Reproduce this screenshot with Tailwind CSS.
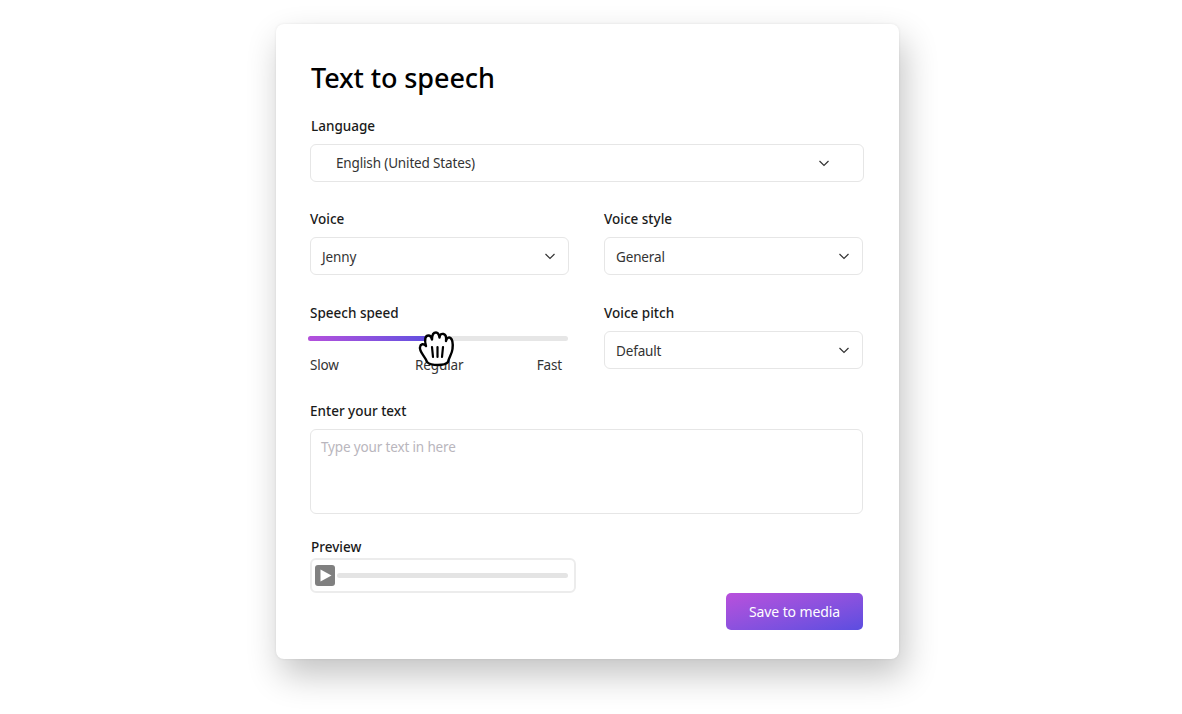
<!DOCTYPE html>
<html lang="en">
<head>
  <meta charset="UTF-8" />
  <title>Text to speech</title>
  <script src="https://cdn.jsdelivr.net/npm/@tailwindcss/browser@4"></script>
</head>
<body class="bg-white h-[714px] w-[1182px] overflow-hidden pt-[24px] font-['Noto_Sans',sans-serif] text-[#1a1a1a]">

  <div class="ml-[276px] w-[623px] h-[635px] bg-white rounded-[8px] shadow-[5px_16px_34px_rgba(0,0,0,0.24),0_0_3px_rgba(0,0,0,0.08)] pt-[36px] pl-[34px] pr-[36px] relative">

    <h1 class="text-[27px] leading-[36px] font-medium text-black pl-[1px] h-[36px] tracking-[-0.1px]">Text to speech</h1>

    <!-- Language -->
    <div class="mt-[20px] pl-[1px] h-[20px] text-[13.5px] leading-[20px] font-medium">Language</div>
    <div class="mt-[8px] h-[38px] w-[554px] border-[1.5px] border-[#e6e6e6] rounded-[6px] flex items-center justify-between pl-[25px] pr-[33px] text-[13.5px] tracking-[-0.15px] text-[#333]">
      <span class="pt-[1px]">English (United States)</span>
      <svg width="12" height="12" viewBox="0 0 12 12" fill="none" stroke="#333" stroke-width="1.2"><path d="M1.5 4l4.5 4.5L10.5 4"/></svg>
    </div>

    <div class="grid grid-cols-[259px_259px] gap-x-[35px] mt-[27px]">
      <!-- Voice -->
      <div>
        <div class="h-[20px] text-[13.5px] leading-[20px] font-medium">Voice</div>
        <div class="mt-[8px] h-[38px] border-[1.5px] border-[#e6e6e6] rounded-[6px] flex items-center justify-between pl-[11px] pr-[12px] text-[13.5px] tracking-[-0.15px] text-[#333]">
          <span class="pt-[3px]">Jenny</span>
          <svg width="12" height="12" viewBox="0 0 12 12" fill="none" stroke="#333" stroke-width="1.2"><path d="M1.5 4l4.5 4.5L10.5 4"/></svg>
        </div>
      </div>
      <div>
        <div class="h-[20px] text-[13.5px] leading-[20px] font-medium">Voice style</div>
        <div class="mt-[8px] h-[38px] border-[1.5px] border-[#e6e6e6] rounded-[6px] flex items-center justify-between pl-[11px] pr-[12px] text-[13.5px] tracking-[-0.15px] text-[#333]">
          <span class="pt-[3px]">General</span>
          <svg width="12" height="12" viewBox="0 0 12 12" fill="none" stroke="#333" stroke-width="1.2"><path d="M1.5 4l4.5 4.5L10.5 4"/></svg>
        </div>
      </div>

      <!-- Speech speed -->
      <div class="mt-[28px] relative">
        <div class="h-[20px] text-[13.5px] leading-[20px] font-medium">Speech speed</div>
        <div class="mt-[13px] -ml-[2px] w-[260px] h-[5px] rounded-full bg-[#e6e6e6]">
          <div class="w-[122px] h-[5px] rounded-full bg-gradient-to-r from-[#b44fdc] to-[#5f4fe0]"></div>
        </div>
        <div class="mt-[14px] flex justify-between pr-[7px] text-[13.5px] leading-[20px] tracking-[-0.15px] text-[#333]">
          <span>Slow</span><span class="ml-[3px]">Regular</span><span>Fast</span>
        </div>
        <!-- grabbing cursor -->
        <svg class="absolute left-[107px] top-[26px] overflow-visible" width="40" height="38" viewBox="0 0 40 38">
          <circle cx="20" cy="6" r="10" fill="#fff" opacity=".9"/>
          <path d="M10 33C8 27 2 23 3 18C3.500 15 6.500 14 9 17C7 10 8.500 6.500 11.500 6.500C13.500 6.500 14.500 8 15 10.500C15 5.500 16.500 3.500 19 3.500C21 3.500 22 5.500 22.500 8.500C23 5 24.500 4.500 26.500 5C28.500 5.500 29.500 8 29 12C30 8.500 32 8 33.500 9C36 11 36 16 35.500 20C35 25 32 28 31 33C28 37 14 37 10 33Z" fill="#fff" stroke="#000" stroke-width="2.400" stroke-linejoin="round"/>
          <path d="M15 18L16 28M20.500 18V28M26 18L25 28" fill="none" stroke="#000" stroke-width="2.200" stroke-linecap="round"/>
        </svg>
      </div>
      <!-- Voice pitch -->
      <div class="mt-[28px]">
        <div class="h-[20px] text-[13.5px] leading-[20px] font-medium">Voice pitch</div>
        <div class="mt-[8px] h-[38px] border-[1.5px] border-[#e6e6e6] rounded-[6px] flex items-center justify-between pl-[11px] pr-[12px] text-[13.5px] tracking-[-0.15px] text-[#333]">
          <span class="pt-[3px]">Default</span>
          <svg width="12" height="12" viewBox="0 0 12 12" fill="none" stroke="#333" stroke-width="1.2"><path d="M1.5 4l4.5 4.5L10.5 4"/></svg>
        </div>
      </div>
    </div>

    <!-- Text input -->
    <div class="mt-[26px] h-[20px] text-[13.5px] leading-[20px] font-medium">Enter your text</div>
    <div class="mt-[8px] h-[85px] w-[553px] border-[1.5px] border-[#e6e6e6] rounded-[6px] px-[10px] py-[7px] text-[13.5px] tracking-[-0.15px] leading-[20px] text-[#b9b6bd]">Type your text in here</div>

    <!-- Preview + save -->
    <div class="mt-[23px] flex justify-between w-[553px]">
      <div class="pb-[37px]">
        <div class="pl-[1px] h-[20px] text-[13.5px] leading-[20px] font-medium">Preview</div>
        <div class="mt-[1px] w-[266px] h-[35px] border-2 border-[#ececec] rounded-[6px] flex items-center gap-[2px] pl-[3px] pr-[6px]">
          <div class="w-[20px] h-[21px] bg-[#808080] rounded-[3px] flex items-center justify-center">
            <svg width="13" height="13" viewBox="0 0 13 13"><path d="M1.500 0.500L12.500 6.500L1.500 12.500Z" fill="#fff"/></svg>
          </div>
          <div class="flex-1 h-[5px] rounded-full bg-[#e4e4e4]"></div>
        </div>
      </div>
      <button class="self-end w-[137px] h-[37px] pt-[1px] rounded-[5px] bg-gradient-to-br from-[#b94fdc] to-[#5b4de0] text-white text-[14px] tracking-[-0.1px] leading-[36px]">Save to media</button>
    </div>
  </div>

</body>
</html>
